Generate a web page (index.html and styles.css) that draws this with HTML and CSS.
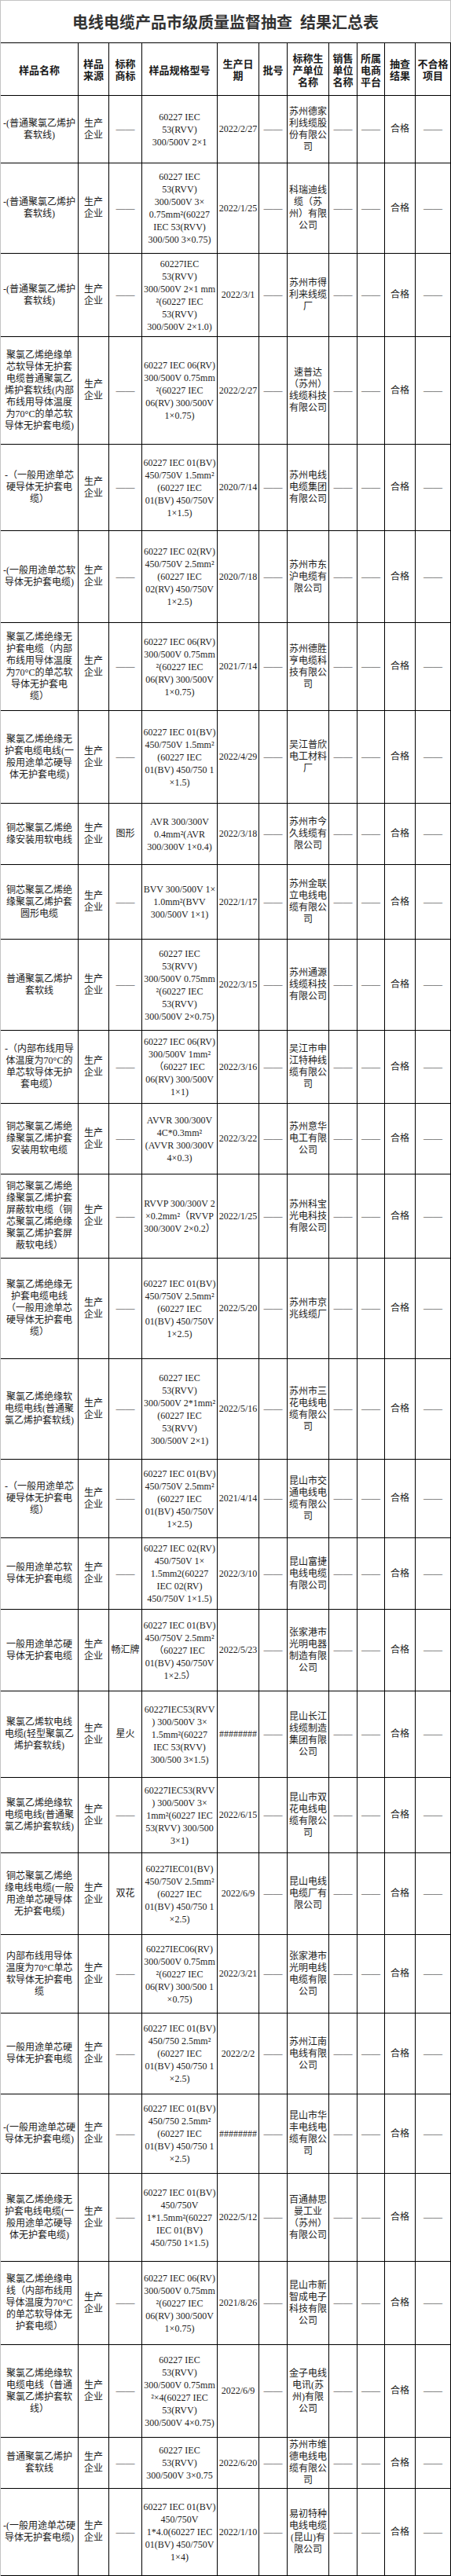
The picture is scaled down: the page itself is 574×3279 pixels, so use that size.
FILE: index.html
```html
<!DOCTYPE html>
<html lang="zh-CN">
<head>
<meta charset="utf-8">
<title>电线电缆产品市级质量监督抽查 结果汇总表</title>
<link rel="stylesheet" href="styles.css">
</head>
<body>
<div class="sheet">
  <div class="title">电线电缆产品市级质量监督抽查&ensp;结果汇总表</div>
  <table class="grid">
    <colgroup>
      <col class="c-name"><col class="c-src"><col class="c-brand"><col class="c-spec"><col class="c-date"><col class="c-batch"><col class="c-mfr"><col class="c-sale"><col class="c-plat"><col class="c-res"><col class="c-unq">
    </colgroup>
    <thead>
      <tr>
        <th>样品名称</th>
        <th>样品<br>来源</th>
        <th>标称<br>商标</th>
        <th>样品规格型号</th>
        <th>生产日<br>期</th>
        <th>批号</th>
        <th>标称生<br>产单位<br>名称</th>
        <th>销售<br>单位<br>名称</th>
        <th>所属<br>电商<br>平台</th>
        <th>抽查<br>结果</th>
        <th>不合格<br>项目</th>
      </tr>
    </thead>
    <tbody>
      <tr>
        <td>-(普通聚氯乙烯护<br>套软线)</td><td>生产<br>企业</td><td>——</td>
        <td class="spec">60227 IEC<br>53(RVV)<br>300/500V 2×1</td>
        <td>2022/2/27</td><td>——</td><td>苏州德家<br>利线缆股<br>份有限公<br>司</td><td>——</td><td>——</td><td>合格</td><td>——</td>
      </tr>
      <tr>
        <td>-(普通聚氯乙烯护<br>套软线)</td><td>生产<br>企业</td><td>——</td>
        <td class="spec">60227 IEC<br>53(RVV)<br>300/500V 3×<br>0.75mm²(60227<br>IEC 53(RVV)<br>300/500 3×0.75)</td>
        <td>2022/1/25</td><td>——</td><td>科瑞迪线<br>缆（苏<br>州）有限<br>公司</td><td>——</td><td>——</td><td>合格</td><td>——</td>
      </tr>
      <tr>
        <td>-(普通聚氯乙烯护<br>套软线)</td><td>生产<br>企业</td><td>——</td>
        <td class="spec">60227IEC<br>53(RVV)<br>300/500V 2×1 mm<br>²(60227 IEC<br>53(RVV)<br>300/500V 2×1.0)</td>
        <td>2022/3/1</td><td>——</td><td>苏州市得<br>利来线缆<br>厂</td><td>——</td><td>——</td><td>合格</td><td>——</td>
      </tr>
      <tr>
        <td>聚氯乙烯绝缘单<br>芯软导体无护套<br>电缆普通聚氯乙<br>烯护套软线(内部<br>布线用导体温度<br>为70°C的单芯软<br>导体无护套电缆)</td><td>生产<br>企业</td><td>——</td>
        <td class="spec">60227 IEC 06(RV)<br>300/500V 0.75mm<br>²(60227 IEC<br>06(RV) 300/500V<br>1×0.75)</td>
        <td>2022/2/27</td><td>——</td><td>速普达<br>（苏州）<br>线缆科技<br>有限公司</td><td>——</td><td>——</td><td>合格</td><td>——</td>
      </tr>
      <tr>
        <td>-（一般用途单芯<br>硬导体无护套电<br>缆）</td><td>生产<br>企业</td><td>——</td>
        <td class="spec">60227 IEC 01(BV)<br>450/750V 1.5mm²<br>(60227 IEC<br>01(BV) 450/750V<br>1×1.5)</td>
        <td>2020/7/14</td><td>——</td><td>苏州电线<br>电缆集团<br>有限公司</td><td>——</td><td>——</td><td>合格</td><td>——</td>
      </tr>
      <tr>
        <td>-(一般用途单芯软<br>导体无护套电缆)</td><td>生产<br>企业</td><td>——</td>
        <td class="spec">60227 IEC 02(RV)<br>450/750V 2.5mm²<br>(60227 IEC<br>02(RV) 450/750V<br>1×2.5)</td>
        <td>2020/7/18</td><td>——</td><td>苏州市东<br>沪电缆有<br>限公司</td><td>——</td><td>——</td><td>合格</td><td>——</td>
      </tr>
      <tr>
        <td>聚氯乙烯绝缘无<br>护套电缆（内部<br>布线用导体温度<br>为70°C的单芯软<br>导体无护套电<br>缆）</td><td>生产<br>企业</td><td>——</td>
        <td class="spec">60227 IEC 06(RV)<br>300/500V 0.75mm<br>²(60227 IEC<br>06(RV) 300/500V<br>1×0.75)</td>
        <td>2021/7/14</td><td>——</td><td>苏州德胜<br>亨电缆科<br>技有限公<br>司</td><td>——</td><td>——</td><td>合格</td><td>——</td>
      </tr>
      <tr>
        <td>聚氯乙烯绝缘无<br>护套电缆电线(一<br>般用途单芯硬导<br>体无护套电缆)</td><td>生产<br>企业</td><td>——</td>
        <td class="spec">60227 IEC 01(BV)<br>450/750V 1.5mm²<br>(60227 IEC<br>01(BV) 450/750 1<br>×1.5)</td>
        <td>2022/4/29</td><td>——</td><td>吴江普欣<br>电工材料<br>厂</td><td>——</td><td>——</td><td>合格</td><td>——</td>
      </tr>
      <tr>
        <td>铜芯聚氯乙烯绝<br>缘安装用软电线</td><td>生产<br>企业</td><td>图形</td>
        <td class="spec">AVR 300/300V<br>0.4mm²(AVR<br>300/300V 1×0.4)</td>
        <td>2022/3/18</td><td>——</td><td>苏州市今<br>久线缆有<br>限公司</td><td>——</td><td>——</td><td>合格</td><td>——</td>
      </tr>
      <tr>
        <td>铜芯聚氯乙烯绝<br>缘聚氯乙烯护套<br>圆形电缆</td><td>生产<br>企业</td><td>——</td>
        <td class="spec">BVV 300/500V 1×<br>1.0mm²(BVV<br>300/500V 1×1)</td>
        <td>2022/1/17</td><td>——</td><td>苏州金联<br>立电线电<br>缆有限公<br>司</td><td>——</td><td>——</td><td>合格</td><td>——</td>
      </tr>
      <tr>
        <td>普通聚氯乙烯护<br>套软线</td><td>生产<br>企业</td><td>——</td>
        <td class="spec">60227 IEC<br>53(RVV)<br>300/500V 0.75mm<br>²(60227 IEC<br>53(RVV)<br>300/500V 2×0.75)</td>
        <td>2022/3/15</td><td>——</td><td>苏州通源<br>线缆科技<br>有限公司</td><td>——</td><td>——</td><td>合格</td><td>——</td>
      </tr>
      <tr>
        <td>-（内部布线用导<br>体温度为70°C的<br>单芯软导体无护<br>套电缆）</td><td>生产<br>企业</td><td>——</td>
        <td class="spec">60227 IEC 06(RV)<br>300/500V 1mm²<br>（60227 IEC<br>06(RV) 300/500V<br>1×1)</td>
        <td>2022/3/16</td><td>——</td><td>吴江市申<br>江特种线<br>缆有限公<br>司</td><td>——</td><td>——</td><td>合格</td><td>——</td>
      </tr>
      <tr>
        <td>铜芯聚氯乙烯绝<br>缘聚氯乙烯护套<br>安装用软电缆</td><td>生产<br>企业</td><td>——</td>
        <td class="spec">AVVR 300/300V<br>4C*0.3mm²<br>(AVVR 300/300V<br>4×0.3)</td>
        <td>2022/3/22</td><td>——</td><td>苏州意华<br>电工有限<br>公司</td><td>——</td><td>——</td><td>合格</td><td>——</td>
      </tr>
      <tr>
        <td>铜芯聚氯乙烯绝<br>缘聚氯乙烯护套<br>屏蔽软电缆（铜<br>芯聚氯乙烯绝缘<br>聚氯乙烯护套屏<br>蔽软电线）</td><td>生产<br>企业</td><td>——</td>
        <td class="spec">RVVP 300/300V 2<br>×0.2mm²（RVVP<br>300/300V 2×0.2）</td>
        <td>2022/1/25</td><td>——</td><td>苏州科宝<br>光电科技<br>有限公司</td><td>——</td><td>——</td><td>合格</td><td>——</td>
      </tr>
      <tr>
        <td>聚氯乙烯绝缘无<br>护套电缆电线<br>（一般用途单芯<br>硬导体无护套电<br>缆）</td><td>生产<br>企业</td><td>——</td>
        <td class="spec">60227 IEC 01(BV)<br>450/750V 2.5mm²<br>(60227 IEC<br>01(BV) 450/750V<br>1×2.5)</td>
        <td>2022/5/20</td><td>——</td><td>苏州市京<br>兆线缆厂</td><td>——</td><td>——</td><td>合格</td><td>——</td>
      </tr>
      <tr>
        <td>聚氯乙烯绝缘软<br>电缆电线(普通聚<br>氯乙烯护套软线)</td><td>生产<br>企业</td><td>——</td>
        <td class="spec">60227 IEC<br>53(RVV)<br>300/500V 2*1mm²<br>(60227 IEC<br>53(RVV)<br>300/500V 2×1)</td>
        <td>2022/5/16</td><td>——</td><td>苏州市三<br>花电线电<br>缆有限公<br>司</td><td>——</td><td>——</td><td>合格</td><td>——</td>
      </tr>
      <tr>
        <td>-（一般用途单芯<br>硬导体无护套电<br>缆）</td><td>生产<br>企业</td><td>——</td>
        <td class="spec">60227 IEC 01(BV)<br>450/750V 2.5mm²<br>(60227 IEC<br>01(BV) 450/750V<br>1×2.5)</td>
        <td>2021/4/14</td><td>——</td><td>昆山市交<br>通电线电<br>缆有限公<br>司</td><td>——</td><td>——</td><td>合格</td><td>——</td>
      </tr>
      <tr>
        <td>一般用途单芯软<br>导体无护套电缆</td><td>生产<br>企业</td><td>——</td>
        <td class="spec">60227 IEC 02(RV)<br>450/750V 1×<br>1.5mm2(60227<br>IEC 02(RV)<br>450/750V 1×1.5)</td>
        <td>2022/3/10</td><td>——</td><td>昆山富捷<br>电线电缆<br>有限公司</td><td>——</td><td>——</td><td>合格</td><td>——</td>
      </tr>
      <tr>
        <td>一般用途单芯硬<br>导体无护套电缆</td><td>生产<br>企业</td><td>畅汇牌</td>
        <td class="spec">60227 IEC 01(BV)<br>450/750V 2.5mm²<br>（60227 IEC<br>01(BV) 450/750V<br>1×2.5）</td>
        <td>2022/5/23</td><td>——</td><td>张家港市<br>光明电器<br>制造有限<br>公司</td><td>——</td><td>——</td><td>合格</td><td>——</td>
      </tr>
      <tr>
        <td>聚氯乙烯软电线<br>电缆(轻型聚氯乙<br>烯护套软线)</td><td>生产<br>企业</td><td>星火</td>
        <td class="spec">60227IEC53(RVV<br>) 300/500V 3×<br>1.5mm²(60227<br>IEC 53(RVV)<br>300/500 3×1.5)</td>
        <td>########</td><td>——</td><td>昆山长江<br>线缆制造<br>集团有限<br>公司</td><td>——</td><td>——</td><td>合格</td><td>——</td>
      </tr>
      <tr>
        <td>聚氯乙烯绝缘软<br>电缆电线(普通聚<br>氯乙烯护套软线)</td><td>生产<br>企业</td><td>——</td>
        <td class="spec">60227IEC53(RVV<br>) 300/500V 3×<br>1mm²(60227 IEC<br>53(RVV) 300/500<br>3×1)</td>
        <td>2022/6/15</td><td>——</td><td>昆山市双<br>花电线电<br>缆有限公<br>司</td><td>——</td><td>——</td><td>合格</td><td>——</td>
      </tr>
      <tr>
        <td>铜芯聚氯乙烯绝<br>缘电线电缆(一般<br>用途单芯硬导体<br>无护套电缆)</td><td>生产<br>企业</td><td>双花</td>
        <td class="spec">60227IEC01(BV)<br>450/750V 2.5mm²<br>(60227 IEC<br>01(BV) 450/750 1<br>×2.5)</td>
        <td>2022/6/9</td><td>——</td><td>昆山电线<br>电缆厂有<br>限公司</td><td>——</td><td>——</td><td>合格</td><td>——</td>
      </tr>
      <tr>
        <td>内部布线用导体<br>温度为70°C单芯<br>软导体无护套电<br>缆</td><td>生产<br>企业</td><td>——</td>
        <td class="spec">60227IEC06(RV)<br>300/500V 0.75mm<br>²(60227 IEC<br>06(RV) 300/500 1<br>×0.75)</td>
        <td>2022/3/21</td><td>——</td><td>张家港市<br>光明电线<br>电缆有限<br>公司</td><td>——</td><td>——</td><td>合格</td><td>——</td>
      </tr>
      <tr>
        <td>一般用途单芯硬<br>导体无护套电缆</td><td>生产<br>企业</td><td>——</td>
        <td class="spec">60227 IEC 01(BV)<br>450/750 2.5mm²<br>(60227 IEC<br>01(BV) 450/750 1<br>×2.5)</td>
        <td>2022/2/2</td><td>——</td><td>苏州江南<br>电线有限<br>公司</td><td>——</td><td>——</td><td>合格</td><td>——</td>
      </tr>
      <tr>
        <td>-(一般用途单芯硬<br>导体无护套电缆)</td><td>生产<br>企业</td><td>——</td>
        <td class="spec">60227 IEC 01(BV)<br>450/750 2.5mm²<br>(60227 IEC<br>01(BV) 450/750 1<br>×2.5)</td>
        <td>########</td><td>——</td><td>昆山市华<br>丰电线电<br>缆有限公<br>司</td><td>——</td><td>——</td><td>合格</td><td>——</td>
      </tr>
      <tr>
        <td>聚氯乙烯绝缘无<br>护套电线电缆(一<br>般用途单芯硬导<br>体无护套电缆)</td><td>生产<br>企业</td><td>——</td>
        <td class="spec">60227 IEC 01(BV)<br>450/750V<br>1*1.5mm²(60227<br>IEC 01(BV)<br>450/750 1×1.5)</td>
        <td>2022/5/12</td><td>——</td><td>百通赫思<br>曼工业<br>（苏州）<br>有限公司</td><td>——</td><td>——</td><td>合格</td><td>——</td>
      </tr>
      <tr>
        <td>聚氯乙烯绝缘电<br>线（内部布线用<br>导体温度为70°C<br>的单芯软导体无<br>护套电缆）</td><td>生产<br>企业</td><td>——</td>
        <td class="spec">60227 IEC 06(RV)<br>300/500V 0.75mm<br>²(60227 IEC<br>06(RV) 300/500V<br>1×0.75)</td>
        <td>2021/8/26</td><td>——</td><td>昆山市新<br>智成电子<br>科技有限<br>公司</td><td>——</td><td>——</td><td>合格</td><td>——</td>
      </tr>
      <tr>
        <td>聚氯乙烯绝缘软<br>电缆电线（普通<br>聚氯乙烯护套软<br>线）</td><td>生产<br>企业</td><td>——</td>
        <td class="spec">60227 IEC<br>53(RVV)<br>300/500V 0.75mm<br>²×4(60227 IEC<br>53(RVV)<br>300/500V 4×0.75)</td>
        <td>2022/6/9</td><td>——</td><td>金子电线<br>电讯(苏<br>州)有限<br>公司</td><td>——</td><td>——</td><td>合格</td><td>——</td>
      </tr>
      <tr>
        <td>普通聚氯乙烯护<br>套软线</td><td>生产<br>企业</td><td>——</td>
        <td class="spec">60227 IEC<br>53(RVV)<br>300/500V 3×0.75</td>
        <td>2022/6/20</td><td>——</td><td>苏州市维<br>德电线电<br>缆有限公<br>司</td><td>——</td><td>——</td><td>合格</td><td>——</td>
      </tr>
      <tr>
        <td>-(一般用途单芯硬<br>导体无护套电缆)</td><td>生产<br>企业</td><td>——</td>
        <td class="spec">60227 IEC 01(BV)<br>450/750V<br>1*4.0(60227 IEC<br>01(BV) 450/750V<br>1×4)</td>
        <td>2022/1/10</td><td>——</td><td>易初特种<br>电线电缆<br>(昆山)有<br>限公司</td><td>——</td><td>——</td><td>合格</td><td>——</td>
      </tr>
    </tbody>
  </table>
</div>
</body>
</html>
```
FILE: styles.css
```css
html, body {
  margin: 0;
  padding: 0;
  background: #ffffff;
}

.sheet {
  width: 574px;
  box-sizing: border-box;
  border-left: 1px solid #c4c4c4;
  border-top: 1px solid #c4c4c4;
  color: #1c1c1c;
  font-family: "Liberation Serif", "Noto Sans CJK SC", serif;
}

.title {
  height: 53px;
  display: flex;
  align-items: center;
  justify-content: center;
  border-right: 1px solid #c4c4c4;
  font-family: "Noto Sans CJK SC", sans-serif;
  font-weight: 700;
  font-size: 20px;
  color: #333333;
  white-space: nowrap;
}

.grid {
  width: 573px;
  table-layout: fixed;
  border-collapse: separate;
  border-spacing: 0;
}

.c-name { width: 99px; }
.c-src { width: 39px; }
.c-brand { width: 42px; }
.c-spec { width: 96px; }
.c-date { width: 53px; }
.c-batch { width: 36px; }
.c-mfr { width: 53px; }
.c-sale { width: 36px; }
.c-plat { width: 35px; }
.c-res { width: 39px; }
.c-unq { width: 45px; }

.grid th,
.grid td {
  border-right: 1px solid #000000;
  border-bottom: 1px solid #000000;
  padding: 0 1px;
  text-align: center;
  vertical-align: middle;
  white-space: nowrap;
  overflow: visible;
}

.grid th {
  border-top: 1px solid #000000;
  font-family: "Noto Sans CJK SC", sans-serif;
  font-weight: 700;
  font-size: 13px;
  line-height: 15px;
  color: #1a1a1a;
}

.grid td {
  font-size: 12px;
  line-height: 15px;
}

.grid td.spec {
  line-height: 16px;
}

.grid thead tr { height: 68px; }

.grid tbody tr:nth-child(1) { height: 86px; }
.grid tbody tr:nth-child(2) { height: 115px; }
.grid tbody tr:nth-child(3) { height: 106px; }
.grid tbody tr:nth-child(4) { height: 137px; }
.grid tbody tr:nth-child(5) { height: 110px; }
.grid tbody tr:nth-child(6) { height: 117px; }
.grid tbody tr:nth-child(7) { height: 112px; }
.grid tbody tr:nth-child(8) { height: 118px; }
.grid tbody tr:nth-child(9) { height: 78px; }
.grid tbody tr:nth-child(10) { height: 95px; }
.grid tbody tr:nth-child(11) { height: 116px; }
.grid tbody tr:nth-child(12) { height: 93px; }
.grid tbody tr:nth-child(13) { height: 90px; }
.grid tbody tr:nth-child(14) { height: 107px; }
.grid tbody tr:nth-child(15) { height: 128px; }
.grid tbody tr:nth-child(16) { height: 128px; }
.grid tbody tr:nth-child(17) { height: 100px; }
.grid tbody tr:nth-child(18) { height: 91px; }
.grid tbody tr:nth-child(19) { height: 104px; }
.grid tbody tr:nth-child(20) { height: 110px; }
.grid tbody tr:nth-child(21) { height: 96px; }
.grid tbody tr:nth-child(22) { height: 104px; }
.grid tbody tr:nth-child(23) { height: 100px; }
.grid tbody tr:nth-child(24) { height: 103px; }
.grid tbody tr:nth-child(25) { height: 101px; }
.grid tbody tr:nth-child(26) { height: 112px; }
.grid tbody tr:nth-child(27) { height: 106px; }
.grid tbody tr:nth-child(28) { height: 118px; }
.grid tbody tr:nth-child(29) { height: 65px; }
.grid tbody tr:nth-child(30) { height: 111px; }
```
